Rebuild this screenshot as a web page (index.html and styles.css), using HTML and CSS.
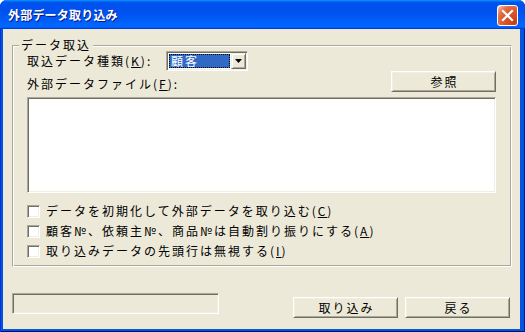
FILE: index.html
```html
<!DOCTYPE html>
<html lang="ja">
<head>
<meta charset="utf-8">
<title>外部データ取り込み</title>
<link rel="stylesheet" href="styles.css">
</head>
<body>
<div class="window">
  <div class="titlebar">
    <span class="title">外部データ取り込み</span>
    <span class="close"><svg width="19" height="19" viewBox="0 0 19 19"><path d="M5 5 L14 14 M14 5 L5 14" stroke="#fff" stroke-width="2.2" stroke-linecap="square"/></svg></span>
  </div>
  <div class="client">
    <div class="group">
      <span class="group-title">データ取込</span>
      <div class="row row-kind">
        <span class="label label-kind">取込データ種類(<u>K</u>):</span>
        <div class="combo">
          <span class="combo-value">顧客</span>
          <span class="combo-btn"><svg width="7" height="4" viewBox="0 0 7 4"><path d="M0 0 H7 L3.5 4 Z" fill="#000"/></svg></span>
        </div>
      </div>
      <div class="row row-file">
        <span class="label label-file">外部データファイル(<u>F</u>):</span>
        <span class="btn btn-browse">参照</span>
      </div>
      <div class="textbox"></div>
      <div class="checks">
        <div class="check"><span class="box"></span><span class="check-text">データを初期化して外部データを取り込む(<u>C</u>)</span></div>
        <div class="check"><span class="box"></span><span class="check-text">顧客№、依頼主№、商品№は自動割り振りにする(<u>A</u>)</span></div>
        <div class="check"><span class="box"></span><span class="check-text">取り込みデータの先頭行は無視する(<u>I</u>)</span></div>
      </div>
    </div>
    <div class="footer">
      <div class="status"></div>
      <div class="actions">
        <span class="btn btn-action">取り込み</span>
        <span class="btn btn-action">戻る</span>
      </div>
    </div>
  </div>
</div>
</body>
</html>
```
FILE: styles.css
```css
* { box-sizing: border-box; }
html, body { margin: 0; padding: 0; background: #fff; }
body {
  font-family: "Noto Sans CJK JP", "Noto Sans", sans-serif;
  font-size: 12px;
  color: #000;
}
u { text-decoration: underline; text-underline-offset: 1px; }

.window {
  width: 525px;
  height: 332px;
  display: flex;
  flex-direction: column;
  background: #0454E2;
  border-radius: 7px 7px 0 0;
  overflow: hidden;
  box-shadow: inset 1px 0 #0831D9, inset -1px 0 #001EA0, inset 0 -1px #001070;
}

.titlebar {
  height: 29px;
  flex: none;
  display: flex;
  align-items: center;
  justify-content: space-between;
  padding: 1px 7px 0 8px;
  background: linear-gradient(180deg, #0997ff 0, #0053ee 8%, #0050ee 40%, #0066ff 88%, #0066ff 93%, #005bff 95%, #003dd7 96%, #003dd7 100%);
}
.title {
  color: #fff;
  font-weight: bold;
  font-size: 12px;
  line-height: 14px;
  letter-spacing: 0.2px;
  text-shadow: 1px 1px 0 #0a1883;
}
.close {
  width: 21px;
  height: 21px;
  border: 1px solid #fff;
  border-radius: 3px;
  background: radial-gradient(circle at 85% 85%, #c63d17 0, #dd5a30 50%, #e0704a 72%, #f4b79f 92%, #ffffff 100%);
  display: flex;
  align-items: center;
  justify-content: center;
}

.client {
  flex: 1;
  margin: 0 5px 3px 3px;
  background: #ECE9D8;
  display: flex;
  flex-direction: column;
  padding: 16px 8px 0 9px;
}

.group {
  position: relative;
  border: 1px solid;
  border-color: #ACA899 #fff #fff #ACA899;
  box-shadow: inset 1px 1px #fff, inset -1px -1px #ACA899;
  padding: 5px 15px 5px 14px;
}
.group-title {
  position: absolute;
  top: -8px;
  left: 6px;
  padding: 0 2px;
  background: #ECE9D8;
  line-height: 14px;
  letter-spacing: 2px;
}

.row { display: flex; }
.label { letter-spacing: 2px; line-height: 14px; white-space: nowrap; }
.row-kind { height: 20px; align-items: center; }
.label-kind { width: 139px; }
.row-file { height: 21px; justify-content: space-between; align-items: flex-end; }
.label-file { margin-bottom: 1px; }

.combo {
  width: 82px;
  height: 20px;
  display: flex;
  background: #fff;
  border: 1px solid;
  border-color: #ACA899 #fff #fff #ACA899;
  box-shadow: inset 1px 1px #716F64, inset -1px -1px #F1EFE2;
  padding: 1px;
}
.combo-value {
  flex: 1;
  margin: 1px 1px 1px 1px;
  background: #316AC5;
  color: #fff;
  border: 1px dotted #000;
  line-height: 12px;
  padding-left: 1px;
  letter-spacing: 2px;
  display: flex;
  align-items: center;
}
.combo-btn {
  width: 15px;
  flex: none;
  display: flex;
  align-items: center;
  justify-content: center;
  background: #ECE9D8;
  border: 1px solid;
  border-color: #F1EFE2 #716F64 #716F64 #F1EFE2;
  box-shadow: inset 1px 1px #fff, inset -1px -1px #ACA899;
}

.btn {
  display: flex;
  align-items: center;
  justify-content: center;
  background: #ECE9D8;
  border: 1px solid;
  border-color: #fff #716F64 #716F64 #fff;
  box-shadow: inset 1px 1px #F1EFE2, inset -1px -1px #ACA899;
  letter-spacing: 2px;
  padding-left: 2px;
  line-height: 14px;
}
.btn-browse { width: 105px; height: 21px; }

.textbox {
  margin-top: 5px;
  height: 96px;
  width: 469px;
  background: #fff;
  border: 1px solid;
  border-color: #ACA899 #fff #fff #ACA899;
  box-shadow: inset 1px 1px #716F64, inset -1px -1px #F1EFE2;
}

.checks { margin-top: 8px; display: flex; flex-direction: column; }
.check { height: 20px; display: flex; align-items: center; }
.box {
  width: 13px;
  height: 13px;
  flex: none;
  background: #fff;
  border: 1px solid;
  border-color: #ACA899 #fff #fff #ACA899;
  box-shadow: inset 1px 1px #716F64, inset -1px -1px #F1EFE2;
  margin-right: 6px;
}
.check-text { letter-spacing: 2px; line-height: 14px; white-space: nowrap; }

.footer {
  margin-top: 26px;
  display: flex;
  justify-content: space-between;
  align-items: flex-start;
  padding-right: 2px;
}
.status {
  width: 207px;
  height: 21px;
  border: 1px solid;
  border-color: #ACA899 #fff #fff #ACA899;
  box-shadow: inset 1px 1px #716F64, inset -1px -1px #F1EFE2;
}
.actions { display: flex; gap: 7px; margin-top: 4px; }
.btn-action { width: 105px; height: 21px; }
```
